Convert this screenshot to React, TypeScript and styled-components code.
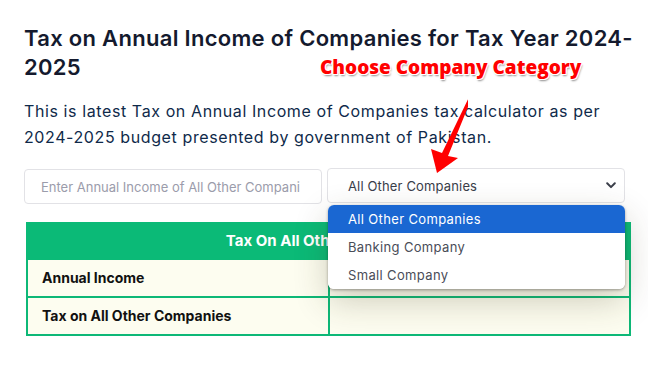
import { createGlobalStyle, styled } from "styled-components";

const Global = createGlobalStyle`
  html, body {
    margin: 0;
    padding: 0;
    background: #ffffff;
  }
  body {
    font-family: Inter, "Noto Sans", sans-serif;
  }
`;

const options = ["All Other Companies", "Banking Company", "Small Company"];

const App = () => {
  return (
    <Page>
      <Global />
      <Title>
        Tax on Annual Income of Companies for Tax Year 2024-
        <br />
        2025
      </Title>
      <Intro>
        This is latest Tax on Annual Income of Companies tax calculator as per
        <br />
        2024-2025 budget presented by government of Pakistan.
      </Intro>

      <Controls>
        <IncomeInput placeholder="Enter Annual Income of All Other Compani" />
        <SelectWrap>
          <SelectBox>
            All Other Companies
            <svg width="10" height="7" viewBox="0 0 10 7">
              <path
                d="M1.2 1.3 L5 5.1 L8.8 1.3"
                fill="none"
                stroke="#3b3f4a"
                strokeWidth="2"
                strokeLinecap="round"
                strokeLinejoin="round"
              />
            </svg>
          </SelectBox>
          <Menu>
            {options.map((item, i) => (
              <MenuItem key={item} active={i === 0}>
                {item}
              </MenuItem>
            ))}
          </Menu>
        </SelectWrap>
      </Controls>

      <ResultTable>
        <thead>
          <tr>
            <HeadCell colSpan={2}>Tax On All Other Companies</HeadCell>
          </tr>
        </thead>
        <tbody>
          <tr>
            <LabelCell>Annual Income</LabelCell>
            <ValueCell />
          </tr>
          <tr>
            <LabelCell>Tax on All Other Companies</LabelCell>
            <ValueCell />
          </tr>
        </tbody>
      </ResultTable>

      <Callout>Choose Company Category</Callout>
      <Arrow width="40" height="90" viewBox="428 88 40 90">
        <polygon
          points="437,173 431,149 442,153 472.5,90 474.5,91 448,156 458,158"
          fill="#ff0000"
        />
      </Arrow>
    </Page>
  );
};

export default App;

const Page = styled.div`
  position: relative;
  width: 648px;
  height: 372px;
  box-sizing: border-box;
  padding: 24px 24px 0 24px;
  overflow: hidden;
`;

const Title = styled.h1`
  margin: 0;
  font-size: 22px;
  line-height: 29px;
  font-weight: 600;
  letter-spacing: 0.3px;
  color: #141a2e;
  white-space: nowrap;
`;

const Intro = styled.p`
  margin: 16px 0 0 0;
  font-size: 16px;
  line-height: 26px;
  font-weight: 400;
  letter-spacing: 0.6px;
  color: #0f2a4a;
  white-space: nowrap;
`;

const Controls = styled.div`
  display: flex;
  gap: 5px;
  margin-top: 18px;
  width: 601px;
`;

const IncomeInput = styled.input`
  box-sizing: border-box;
  width: 298px;
  height: 35px;
  margin-top: 1px;
  border: 1px solid #e2e2e6;
  border-radius: 4px;
  padding: 0 16px;
  font-family: Inter, "Noto Sans", sans-serif;
  font-size: 13px;
  outline: none;
  &::placeholder {
    color: #9b9cab;
  }
`;

const SelectWrap = styled.div`
  position: relative;
  width: 298px;
`;

const SelectBox = styled.div`
  box-sizing: border-box;
  height: 35px;
  border: 1px solid #e2e2e6;
  border-radius: 4px;
  padding: 0 8px 0 20px;
  display: flex;
  align-items: center;
  justify-content: space-between;
  font-size: 13px;
  letter-spacing: 0.15px;
  color: #3a3e4a;
`;

const Menu = styled.div`
  position: absolute;
  left: 1px;
  top: 37px;
  width: 297px;
  background: #ffffff;
  border-radius: 6px;
  overflow: hidden;
  z-index: 5;
  box-shadow: 0 1px 3px rgba(0, 0, 0, 0.35), 0 12px 34px rgba(60, 50, 20, 0.24);
`;

const MenuItem = styled.div<{ active: boolean }>`
  height: 28px;
  display: flex;
  align-items: center;
  padding-left: 20px;
  font-size: 13px;
  letter-spacing: 0.35px;
  color: ${(p) => (p.active ? "#ffffff" : "#4a4d58")};
  background: ${(p) => (p.active ? "#1a67d2" : "#ffffff")};
`;

const ResultTable = styled.table`
  margin: 18px 0 0 2px;
  width: 605px;
  border-collapse: collapse;
  table-layout: fixed;
`;

const HeadCell = styled.th`
  height: 34px;
  background: #0bba77;
  color: #ffffff;
  font-size: 15px;
  line-height: 18px;
  font-weight: 700;
  text-align: center;
  border: 2px solid #0bba77;
  border-radius: 3px 3px 0 0;
  padding: 0;
`;

const LabelCell = styled.td`
  height: 34px;
  border: 2px solid #0db877;
  background: #fdfdf0;
  padding: 0 0 0 14px;
  font-size: 14px;
  line-height: 18px;
  font-weight: 700;
  color: #111111;
`;

const ValueCell = styled.td`
  height: 34px;
  border: 2px solid #0db877;
  background: #fdfdf0;
`;

const Callout = styled.div`
  position: absolute;
  left: 320px;
  top: 54px;
  font-family: "Open Sans", "Noto Sans", sans-serif;
  font-size: 19px;
  font-weight: 800;
  color: #ff0000;
  white-space: nowrap;
  text-shadow: -1px -1px 0 #fff, 1px -1px 0 #fff, -1px 1px 0 #fff,
    1px 1px 0 #fff, 1px 2px 2px rgba(0, 0, 0, 0.45);
`;

const Arrow = styled.svg`
  position: absolute;
  left: 428px;
  top: 88px;
  z-index: 6;
`;
